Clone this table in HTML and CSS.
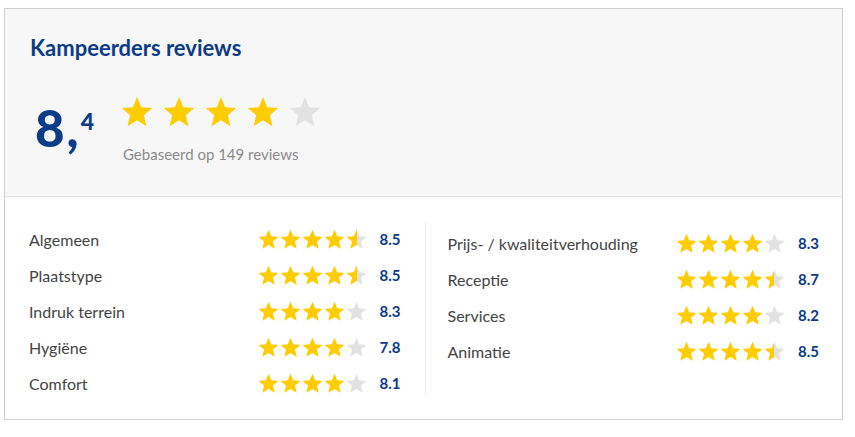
FILE: index.html
```html
<!DOCTYPE html>
<html lang="nl">
<head>
<meta charset="utf-8">
<link rel="stylesheet" href="styles.css">
</head>
<body>
<svg width="0" height="0" class="defs" aria-hidden="true">
  <defs>
    <linearGradient id="half">
      <stop offset="50%" stop-color="#ffcc00"/>
      <stop offset="50%" stop-color="#e2e2e2"/>
    </linearGradient>
    <symbol id="star" viewBox="0 0 24 24">
      <polygon points="12,0.8 15.1,8.4 23.4,9 17.1,14.4 19.1,22.6 12,18.2 4.9,22.6 6.9,14.4 0.6,9 8.9,8.4"/>
    </symbol>
  </defs>
</svg>
<section class="card">
  <header class="summary">
    <h2 class="title">Kampeerders reviews</h2>
    <div class="score-row">
      <div class="score"><span class="score-int">8,</span><sup class="score-dec">4</sup></div>
      <div class="score-meta">
        <div class="stars-lg">
          <svg class="on"><use href="#star"/></svg>
          <svg class="on"><use href="#star"/></svg>
          <svg class="on"><use href="#star"/></svg>
          <svg class="on"><use href="#star"/></svg>
          <svg class="off"><use href="#star"/></svg>
        </div>
        <p class="based">Gebaseerd op 149 reviews</p>
      </div>
    </div>
  </header>
  <div class="details">
    <ul class="col col-left">
      <li class="row"><span class="label">Algemeen</span><span class="stars"><svg class="on"><use href="#star"/></svg><svg class="on"><use href="#star"/></svg><svg class="on"><use href="#star"/></svg><svg class="on"><use href="#star"/></svg><svg class="half"><use href="#star"/></svg></span><span class="val">8.5</span></li>
      <li class="row"><span class="label">Plaatstype</span><span class="stars"><svg class="on"><use href="#star"/></svg><svg class="on"><use href="#star"/></svg><svg class="on"><use href="#star"/></svg><svg class="on"><use href="#star"/></svg><svg class="half"><use href="#star"/></svg></span><span class="val">8.5</span></li>
      <li class="row"><span class="label">Indruk terrein</span><span class="stars"><svg class="on"><use href="#star"/></svg><svg class="on"><use href="#star"/></svg><svg class="on"><use href="#star"/></svg><svg class="on"><use href="#star"/></svg><svg class="off"><use href="#star"/></svg></span><span class="val">8.3</span></li>
      <li class="row"><span class="label">Hygiëne</span><span class="stars"><svg class="on"><use href="#star"/></svg><svg class="on"><use href="#star"/></svg><svg class="on"><use href="#star"/></svg><svg class="on"><use href="#star"/></svg><svg class="off"><use href="#star"/></svg></span><span class="val">7.8</span></li>
      <li class="row"><span class="label">Comfort</span><span class="stars"><svg class="on"><use href="#star"/></svg><svg class="on"><use href="#star"/></svg><svg class="on"><use href="#star"/></svg><svg class="on"><use href="#star"/></svg><svg class="off"><use href="#star"/></svg></span><span class="val">8.1</span></li>
    </ul>
    <ul class="col col-right">
      <li class="row"><span class="label">Prijs- / kwaliteitverhouding</span><span class="stars"><svg class="on"><use href="#star"/></svg><svg class="on"><use href="#star"/></svg><svg class="on"><use href="#star"/></svg><svg class="on"><use href="#star"/></svg><svg class="off"><use href="#star"/></svg></span><span class="val">8.3</span></li>
      <li class="row"><span class="label">Receptie</span><span class="stars"><svg class="on"><use href="#star"/></svg><svg class="on"><use href="#star"/></svg><svg class="on"><use href="#star"/></svg><svg class="on"><use href="#star"/></svg><svg class="half"><use href="#star"/></svg></span><span class="val">8.7</span></li>
      <li class="row"><span class="label">Services</span><span class="stars"><svg class="on"><use href="#star"/></svg><svg class="on"><use href="#star"/></svg><svg class="on"><use href="#star"/></svg><svg class="on"><use href="#star"/></svg><svg class="off"><use href="#star"/></svg></span><span class="val">8.2</span></li>
      <li class="row"><span class="label">Animatie</span><span class="stars"><svg class="on"><use href="#star"/></svg><svg class="on"><use href="#star"/></svg><svg class="on"><use href="#star"/></svg><svg class="on"><use href="#star"/></svg><svg class="half"><use href="#star"/></svg></span><span class="val">8.5</span></li>
    </ul>
  </div>
</section>
</body>
</html>
```

FILE: styles.css
```css
* { box-sizing: border-box; }

body {
  margin: 0;
  padding: 8px 12px 0 4px;
  background: #ffffff;
  font-family: Lato, "Open Sans", sans-serif;
  color: #444444;
}

.defs { position: absolute; width: 0; height: 0; }

.card {
  width: 839px;
  border: 1px solid #cfcfcf;
  background: #ffffff;
}

.summary {
  background: #f7f7f7;
  border-bottom: 1px solid #e3e3e3;
  padding: 24px 25px 0 25px;
  height: 188px;
}

.title {
  margin: 0;
  font-size: 22px;
  line-height: 30px;
  font-weight: 700;
  color: #0c3b87;
}

.score-row {
  display: flex;
  align-items: flex-start;
  margin-top: 33px;
}

.score {
  display: flex;
  align-items: flex-start;
  color: #0c3b87;
  font-weight: 900;
  width: 93px;
  padding-left: 5px;
  padding-top: 2px;
}

.score-int {
  font-size: 51px;
  line-height: 60px;
  letter-spacing: 2px;
}

.score-dec {
  font-size: 23px;
  line-height: 26px;
  font-weight: 900;
  vertical-align: baseline;
  margin-top: 10px;
  margin-left: 0;
}

.score-meta {
  display: flex;
  flex-direction: column;
}

.stars-lg {
  display: flex;
  gap: 10px;
  margin-left: -2px;
}

.stars-lg svg {
  width: 32px;
  height: 32px;
}

.on { fill: #ffcc00; }
.off { fill: #e2e2e2; }
.half { fill: url(#half); }

.based {
  margin: 17px 0 0 0;
  font-size: 15px;
  line-height: 18px;
  color: #8a8a8a;
}

.details {
  display: flex;
  padding: 25px 23px 24px 24px;
}

.col {
  list-style: none;
  margin: 0;
  flex: 1;
  display: flex;
  flex-direction: column;
  gap: 12px;
}

.col-left {
  padding: 5px 0 0 0;
  border-right: 1px solid #ececec;
  padding-right: 24px;
}

.col-right {
  padding: 9px 0 0 22px;
}

.row {
  display: flex;
  align-items: center;
  height: 24px;
}

.label {
  flex: 1;
  font-size: 16px;
  color: #444444;
}

.stars {
  display: flex;
  gap: 1px;
}

.stars svg {
  width: 21px;
  height: 21px;
}

.val {
  width: 34px;
  text-align: right;
  font-size: 15px;
  font-weight: 700;
  color: #0c3b87;
}
```
